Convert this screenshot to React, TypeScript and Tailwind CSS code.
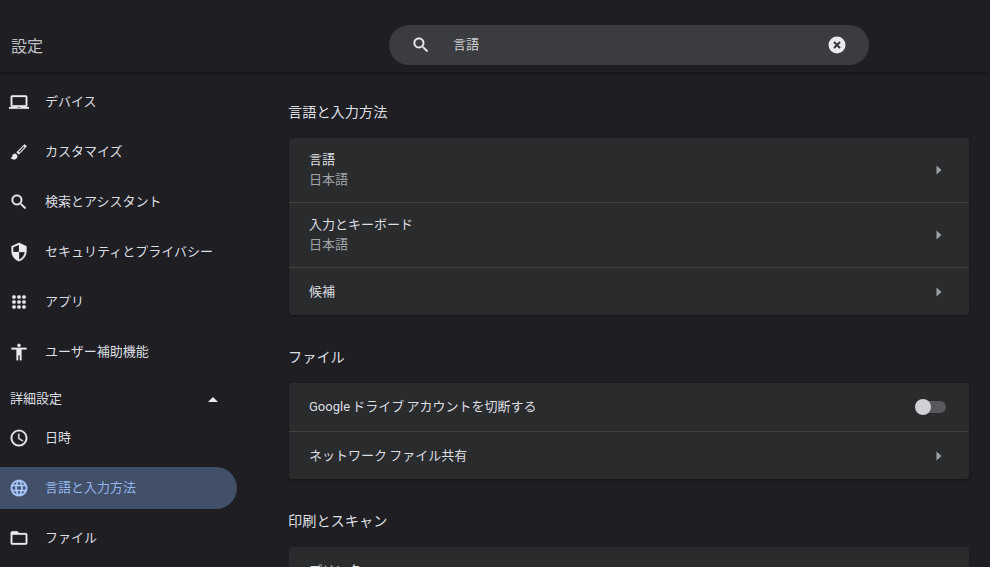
const font = "font-['Roboto','Noto_Sans_CJK_JP',sans-serif]";

const Icon = ({ d, className = "" }: { d: string; className?: string }) => (
  <svg className={`w-5 h-5 fill-current stroke-current shrink-0 ${className}`} viewBox="0 0 24 24" strokeWidth={0.3}>
    <path fillRule="evenodd" d={d} />
  </svg>
);

const icons = {
  laptop: "M20 18c1.1 0 1.99-.9 1.99-2L22 6c0-1.1-.9-2-2-2H4c-1.1 0-2 .9-2 2v10c0 1.1.9 2 2 2H0v2h24v-2h-4zM4 6h16v10H4V6zM10 18h4v.8h-4z",
  brush: "M7 14c-1.66 0-3 1.34-3 3 0 1.31-1.16 2-2 2 .92 1.22 2.49 2 4 2 2.21 0 4-1.79 4-4 0-1.66-1.34-3-3-3zM18.67 3c-.26 0-.51.1-.71.29L9 12.25 11.75 15l8.96-8.96c.39-.39.39-1.02 0-1.41l-1.34-1.34c-.2-.2-.45-.29-.7-.29zM11.37 11.57L17.77 5.17 18.83 6.23 12.43 12.63z",
  search: "M15.5 14h-.79l-.28-.27A6.47 6.47 0 0 0 16 9.5 6.5 6.5 0 1 0 9.5 16c1.61 0 3.09-.59 4.23-1.57l.27.28v.79l5 4.99L20.49 19l-4.99-5zm-6 0C7.01 14 5 11.99 5 9.5S7.01 5 9.5 5 14 7.01 14 9.5 11.99 14 9.5 14z",
  shield: "M12 1L3 5v6c0 5.55 3.84 10.74 9 12 5.16-1.26 9-6.45 9-12V5l-9-4zm0 10.99h7c-.53 4.12-3.28 7.79-7 8.94V12H5V6.3l7-3.11v8.8z",
  apps: "M6 8.2a2.2 2.2 0 1 0 0-4.4 2.2 2.2 0 0 0 0 4.4zm6 0a2.2 2.2 0 1 0 0-4.4 2.2 2.2 0 0 0 0 4.4zm6 0a2.2 2.2 0 1 0 0-4.4 2.2 2.2 0 0 0 0 4.4zM6 14.2a2.2 2.2 0 1 0 0-4.4 2.2 2.2 0 0 0 0 4.4zm6 0a2.2 2.2 0 1 0 0-4.4 2.2 2.2 0 0 0 0 4.4zm6 0a2.2 2.2 0 1 0 0-4.4 2.2 2.2 0 0 0 0 4.4zM6 20.2a2.2 2.2 0 1 0 0-4.4 2.2 2.2 0 0 0 0 4.4zm6 0a2.2 2.2 0 1 0 0-4.4 2.2 2.2 0 0 0 0 4.4zm6 0a2.2 2.2 0 1 0 0-4.4 2.2 2.2 0 0 0 0 4.4z",
  person: "M12 2c1.1 0 2 .9 2 2s-.9 2-2 2-2-.9-2-2 .9-2 2-2zm9 7h-6v13h-2v-6h-2v6H9V9H3V7h18v2z",
  clock: "M11.99 2C6.47 2 2 6.48 2 12s4.47 10 9.99 10C17.52 22 22 17.52 22 12S17.52 2 11.99 2zM12 20c-4.42 0-8-3.58-8-8s3.58-8 8-8 8 3.58 8 8-3.58 8-8 8zm.5-13H11v6l5.25 3.15.75-1.23-4.5-2.67V7z",
  globe: "M11.99 2C6.47 2 2 6.48 2 12s4.47 10 9.99 10C17.52 22 22 17.52 22 12S17.52 2 11.99 2zm6.93 6h-2.95a15.65 15.65 0 0 0-1.38-3.56A8.03 8.03 0 0 1 18.92 8zM12 4.04c.83 1.2 1.48 2.53 1.91 3.96h-3.82c.43-1.43 1.08-2.76 1.91-3.96zM4.26 14C4.1 13.36 4 12.69 4 12s.1-1.36.26-2h3.38c-.08.66-.14 1.32-.14 2s.06 1.34.14 2H4.26zm.82 2h2.95c.32 1.25.78 2.45 1.38 3.56A7.987 7.987 0 0 1 5.08 16zm2.95-8H5.08a7.987 7.987 0 0 1 4.33-3.56A15.65 15.65 0 0 0 8.03 8zM12 19.96c-.83-1.2-1.48-2.53-1.91-3.96h3.82c-.43 1.43-1.08 2.76-1.91 3.96zM14.34 14H9.66c-.09-.66-.16-1.32-.16-2s.07-1.35.16-2h4.68c.09.65.16 1.32.16 2s-.07 1.34-.16 2zm.25 5.56c.6-1.11 1.06-2.31 1.38-3.56h2.95a8.03 8.03 0 0 1-4.33 3.56zM16.36 14c.08-.66.14-1.32.14-2s-.06-1.34-.14-2h3.38c.16.64.26 1.31.26 2s-.1 1.36-.26 2h-3.38z",
  folder: "M20 6h-8l-2-2H4c-1.1 0-1.99.9-1.99 2L2 18c0 1.1.9 2 2 2h16c1.1 0 2-.9 2-2V8c0-1.1-.9-2-2-2zm0 12H4V8h16v10z",
};

const NavItem = ({ icon, label, active }: { icon: string; label: string; active?: boolean }) => (
  <div className={`flex items-center h-[42px] w-[237px] rounded-r-full pl-[9px] ${active ? "bg-[#414f68] text-[#94b6ee]" : "text-[#dcdee1]"}`}>
    <Icon d={icon} className={active ? "text-[#a8c7fa]" : "text-[#e8eaed]"} />
    <span className="ml-4 text-[13px] leading-5">{label}</span>
  </div>
);

const Arrow = () => (
  <svg className="w-[6px] h-[10px] fill-[#9aa0a6] ml-auto mr-[27px]" viewBox="0 0 6 10">
    <path d="M0.5 0.5 L5.5 5 L0.5 9.5 Z" />
  </svg>
);

const Row = ({ title, sub, h, border }: { title: string; sub?: string; h: string; border?: boolean }) => (
  <div className={`flex items-center pl-5 ${h} ${border ? "border-b border-[#3f4043]" : ""}`}>
    <div className="text-[13px] leading-5 [word-spacing:-1px]">
      <div className="text-[#dcdee1]">{title}</div>
      {sub && <div className="text-[#a0a3a8]">{sub}</div>}
    </div>
    <Arrow />
  </div>
);

const Heading = ({ children, className = "" }: { children: string; className?: string }) => (
  <h2 className={`text-[14.2px] leading-5 -ml-px text-[#dcdee1] font-normal ${className}`}>{children}</h2>
);

const App = () => {
  return (
    <div className={`${font} antialiased w-[990px] h-[567px] overflow-hidden bg-[#1f1f23] flex flex-col`}>
      <header className="h-[73px] shrink-0 relative flex items-center border-b border-[#18181b] shadow-[0_1px_2px_rgba(0,0,0,0.3)]">
        <span className="ml-[11px] mt-[21px] text-[16px] text-[#bfc1c4]">設定</span>
        <div className="absolute left-[389px] top-[25px] w-[480px] h-10 rounded-full bg-[#3b3c3f] flex items-center">
          <Icon d={icons.search} className="ml-[22px] text-[#e8eaed]" />
          <span className="ml-[22px] text-[13px] text-[#d0d2d5]">言語</span>
          <svg className="w-[18px] h-[18px] ml-auto mr-[23px]" viewBox="0 0 18 18">
            <circle cx="9" cy="9" r="8.5" fill="#e8eaed" />
            <path d="M6 6 L12 12 M12 6 L6 12" stroke="#35363a" strokeWidth="2" />
          </svg>
        </div>
      </header>

      <div className="flex flex-1 min-h-0">
        <nav className="w-[289px] shrink-0 pt-[8px] flex flex-col gap-2">
          <NavItem icon={icons.laptop} label="デバイス" />
          <NavItem icon={icons.brush} label="カスタマイズ" />
          <NavItem icon={icons.search} label="検索とアシスタント" />
          <NavItem icon={icons.shield} label="セキュリティとプライバシー" />
          <NavItem icon={icons.apps} label="アプリ" />
          <NavItem icon={icons.person} label="ユーザー補助機能" />
          <div className="flex items-center h-[36px] w-[237px] pl-[10px] text-[13px] text-[#dcdee1] -mb-[8px]">
            詳細設定
            <svg className="w-[10px] h-[5px] fill-[#e8eaed] ml-[146px]" viewBox="0 0 10 5">
              <path d="M0 5 L5 0 L10 5 Z" />
            </svg>
          </div>
          <NavItem icon={icons.clock} label="日時" />
          <NavItem icon={icons.globe} label="言語と入力方法" active />
          <NavItem icon={icons.folder} label="ファイル" />
        </nav>

        <main className="w-[680px] pt-[29px]">
          <Heading className="mb-[16px]">言語と入力方法</Heading>
          <section className="rounded bg-[#2a2b2d] shadow-[0_1px_3px_rgba(0,0,0,0.4)]">
            <Row title="言語" sub="日本語" h="h-[65px]" border />
            <Row title="入力とキーボード" sub="日本語" h="h-[65px]" border />
            <Row title="候補" h="h-[47px]" />
          </section>

          <Heading className="mt-[32px] mb-[16px]">ファイル</Heading>
          <section className="rounded bg-[#2a2b2d] shadow-[0_1px_3px_rgba(0,0,0,0.4)]">
            <div className="flex items-center pl-5 h-[49px] pb-px border-b border-[#3f4043]">
              <span className="text-[13px] text-[#dcdee1] [word-spacing:-1px]">Google ドライブ アカウントを切断する</span>
              <div className="relative ml-auto mr-[23px] w-[30px] h-[12px] rounded-full bg-[#58595c]">
                <div className="absolute -left-[1px] -top-[2px] w-4 h-4 rounded-full bg-[#d0d1d4]" />
              </div>
            </div>
            <Row title="ネットワーク ファイル共有" h="h-[47px]" />
          </section>

          <Heading className="mt-[32px] mb-[16px]">印刷とスキャン</Heading>
          <section className="rounded-t bg-[#2a2b2d] h-[48px] flex items-center pl-5 text-[13px] text-[#dcdee1]">
            プリンタ
          </section>
        </main>
      </div>
    </div>
  );
};

export default App;
